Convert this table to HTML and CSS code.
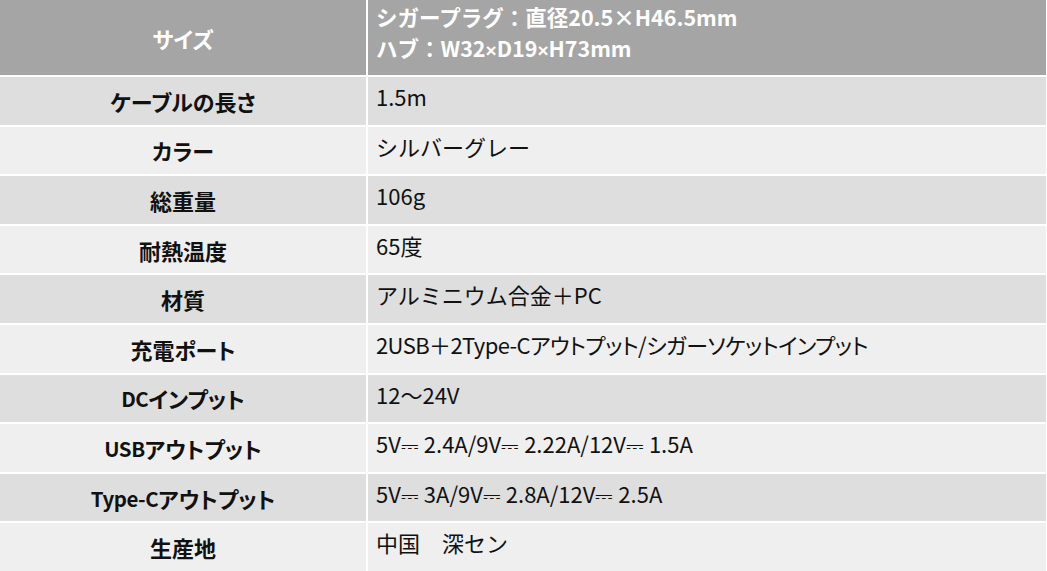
FILE: index.html
```html
<!DOCTYPE html>
<html lang="ja">
<head>
<meta charset="utf-8">
<link rel="stylesheet" href="styles.css">
</head>
<body>
<div class="spec">
  <div class="cell head label">サイズ</div>
  <div class="cell head value">シガープラグ：直径20.5×H46.5mm<br>ハブ：W32<span class="x">×</span>D19<span class="x">×</span>H73mm</div>

  <div class="cell dark label">ケーブルの長さ</div>
  <div class="cell dark value">1.5m</div>

  <div class="cell light label">カラー</div>
  <div class="cell light value">シルバーグレー</div>

  <div class="cell dark label">総重量</div>
  <div class="cell dark value">106g</div>

  <div class="cell light label">耐熱温度</div>
  <div class="cell light value">65度</div>

  <div class="cell dark label">材質</div>
  <div class="cell dark value">アルミニウム合金＋PC</div>

  <div class="cell light label">充電ポート</div>
  <div class="cell light value fit">2USB＋2Type-Cアウトプット/シガーソケットインプット</div>

  <div class="cell dark label"><span class="lat">DC</span>インプット</div>
  <div class="cell dark value">12～24V</div>

  <div class="cell light label"><span class="lat">USB</span>アウトプット</div>
  <div class="cell light value">5V<span class="dc">⎓</span> 2.4A/9V<span class="dc">⎓</span> 2.22A/12V<span class="dc">⎓</span> 1.5A</div>

  <div class="cell dark label"><span class="lat">Type-C</span>アウトプット</div>
  <div class="cell dark value">5V<span class="dc">⎓</span> 3A/9V<span class="dc">⎓</span> 2.8A/12V<span class="dc">⎓</span> 2.5A</div>

  <div class="cell light label">生産地</div>
  <div class="cell light value">中国　深セン</div>
</div>
</body>
</html>
```

FILE: styles.css
```css
html, body {
  margin: 0;
  padding: 0;
  background: #ffffff;
}

body {
  width: 1047px;
  height: 571px;
  overflow: hidden;
  font-family: "Noto Sans CJK JP", "Noto Sans", sans-serif;
  font-size: 22px;
  color: #111111;
}

.spec {
  display: grid;
  grid-template-columns: 366px 678px;
  grid-template-rows: 75px repeat(10, 1fr);
  column-gap: 2px;
  row-gap: 2px;
  height: 571px;
}

.cell {
  box-sizing: border-box;
  line-height: 28px;
}

.head {
  background: #a5a5a5;
  color: #ffffff;
  font-weight: 700;
}

.dark {
  background: #dedede;
}

.light {
  background: #efefef;
}

.label {
  display: flex;
  align-items: center;
  justify-content: center;
  font-weight: 700;
  font-feature-settings: "palt" 1;
}

.lat {
  font-size: 20.5px;
  letter-spacing: -0.5px;
}

.value {
  padding: 5px 0 0 8px;
}

.head.value {
  font-size: 21.5px;
  line-height: 31px;
  padding-top: 1px;
}

.fit {
  font-feature-settings: "palt" 1;
  letter-spacing: -0.6px;
}

.x {
  font-family: "Liberation Sans", sans-serif;
  font-size: 19px;
}

.dc {
  font-family: "DejaVu Sans", sans-serif;
  font-size: 22px;
  line-height: 1;
}
```
